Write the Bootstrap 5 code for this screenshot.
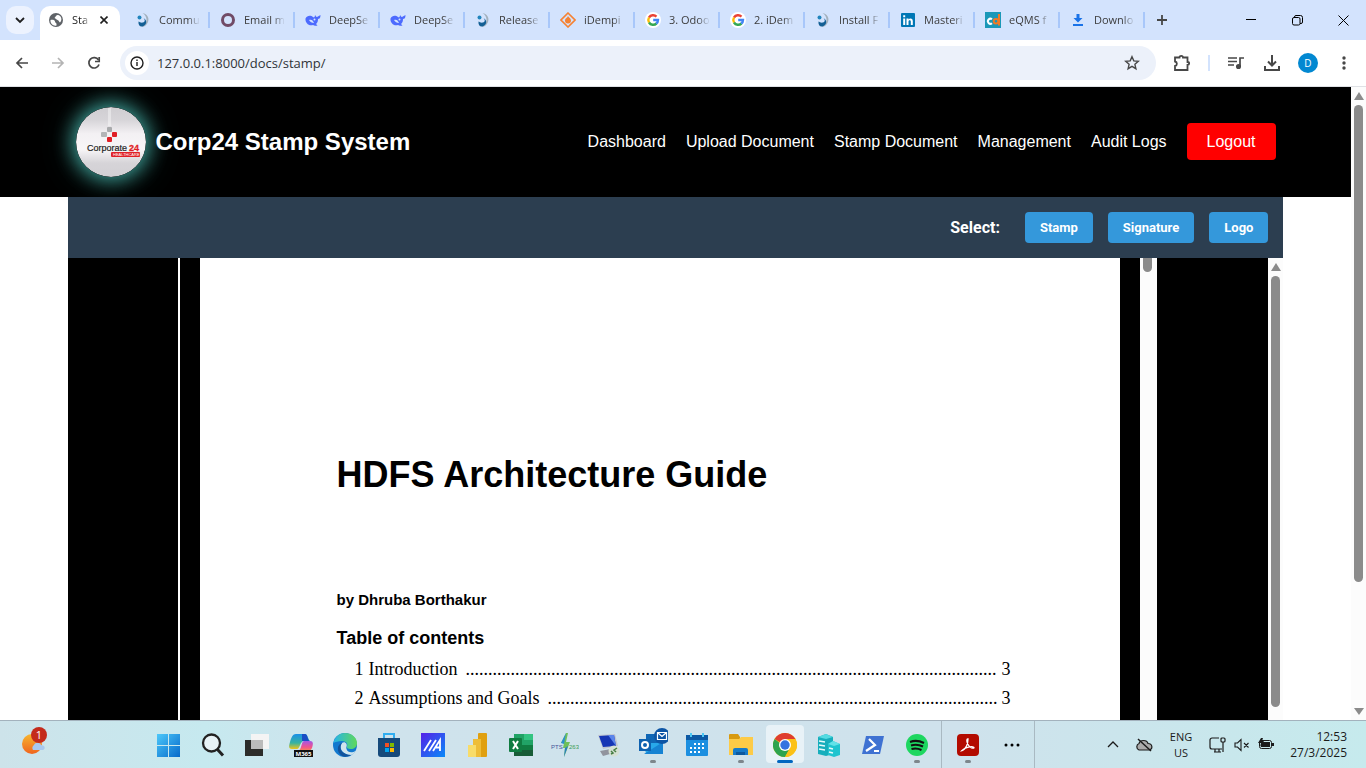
<!DOCTYPE html>
<html lang="en">
<head>
<meta charset="utf-8">
<meta name="viewport" content="width=device-width, initial-scale=1">
<title>Stamp Document</title>
<link rel="stylesheet" href="https://cdn.jsdelivr.net/npm/bootstrap@5.3.0/dist/css/bootstrap.min.css">
<style>
  body { font-family: "Liberation Sans", Arial, sans-serif; color: #000; background: #fff; }
  button { font-family: inherit; }
  svg { display: block; flex: none; }
  .bare { border: 0; background: none; padding: 0; color: inherit; }
  .ui-font { font-family: "Open Sans", "Noto Sans", sans-serif; }

  /* browser tabs */
  .tabstrip { height: 40px; background: #d3e3fd; color: #3c3c3c; font-size: 11px; }
  .tab-search { width: 28px; height: 28px; margin: 0 6px; border-radius: 10px; background: #ecf2fe; }
  .tab-row { min-width: 0; }
  .browser-tab { flex: 0 1 85px; height: 16px; padding: 0 8px 0 10px; gap: 8px; margin-top: 12px; border: 0; border-right: 2px solid #a8c7fa; background: none; color: inherit; min-width: 0; }
  .tab-title { flex: 1; overflow: hidden; white-space: nowrap; text-align: left; line-height: 20px; -webkit-mask-image: linear-gradient(90deg, #000 70%, transparent); mask-image: linear-gradient(90deg, #000 70%, transparent); }
  .active-tab { width: 80px; height: 34px; padding: 0 8px; gap: 8px; background: #fff; border-radius: 10px 10px 0 0; color: #1f1f1f; margin-right: 5px; padding-bottom: 6px; }
  .active-tab .tab-title { flex: none; width: 17px; }
  .win-btn { width: 46px; height: 40px; color: #000; }

  /* address bar */
  .addressbar { height: 47px; border-bottom: 1px solid #dfe1e5; background: #fff; color: #474747; }
  .nav-btn { width: 36px; height: 34px; }
  .omnibox { height: 34px; border-radius: 17px; background: #ecf1fa; margin-left: 8px; }
  .site-info { width: 24px; height: 24px; margin: 0 8px 0 5px; border-radius: 50%; background: #fff; color: #1f1f1f; }
  .omnibox input { font-family: "Open Sans", sans-serif; font-size: 13px; color: #303438; line-height: 24px; outline: 0; }
  .tool-btn { width: 36px; height: 34px; }
  .tool-split { width: 2px; height: 16px; background: #d3e3fd; margin: 0 8px; }
  .avatar { width: 20px; height: 20px; border-radius: 50%; background: #0288d1; color: #fff; font-size: 10px; margin: 0 8px; }

  /* site header */
  .site-header { background: #000; padding: 20px 0; }
  .header-inner { max-width: 1200px; }
  .brand-mark { width: 70px; height: 70px; border-radius: 50%; box-shadow: 0 0 20px 3px #42a8a0, 0 0 40px rgba(64, 160, 150, .25); }
  .brand-name { font-size: 24px; line-height: 30px; font-weight: 700; color: #fff; margin-left: 10px; }
  .site-nav { gap: 20px; font-size: 16px; line-height: 21px; padding-bottom: 1px; }
  .site-nav a { color: #fff; text-decoration: none; }
  .site-nav .logout { background: #f00; border-radius: 4px; padding: 8px 20px; }

  /* stamping tools */
  .work-area { width: 90%; }
  .stamp-bar { background: #2c3e50; padding: 15px; gap: 15px; font-family: Roboto, sans-serif; font-weight: 700; color: #fff; }
  .stamp-bar .pick-label { font-size: 16px; line-height: 20px; margin-right: 10px; }
  .stamp-bar button { background: #3498db; color: #fff; border: 0; border-radius: 4px; font-size: 13px; line-height: 15px; font-weight: 700; padding: 8px 15px; }

  /* document viewer */
  .black-bg { background: #000; }
  .pdf-frame { width: 979px; background: #000; border-left: 2px solid #fff; }
  .paper { background: #fff; margin: 0 20px; padding: 196px 110px 0 136px; }
  .paper h1 { font-size: 36px; line-height: 42px; font-weight: 700; margin: 0 0 94px; }
  .byline { font-size: 15px; line-height: 20px; font-weight: 700; margin: 0 0 16px; }
  .paper h2 { font-size: 18px; line-height: 24px; font-weight: 700; margin: 0 0 5px; }
  .toc { font-family: "Liberation Serif", "Times New Roman", serif; font-size: 18px; line-height: 29px; padding-left: 18px; white-space: nowrap; }
  .toc a { color: #000; text-decoration: none; }
  .toc .num { width: 14px; }
  .toc .num-sub { width: 28px; }
  .toc .leader { width: 0; }

  /* scrollbars */
  .scroll-rail { width: 15px; background: #fcfcfc; padding: 5px 3px; }
  .scroll-thumb { width: 9px; border-radius: 5px; background: #8b8b8b; }
  .arrow-up { border: 5px solid transparent; border-top: 0; border-bottom: 8px solid #8b8b8b; margin-bottom: 5px; }
  .arrow-down { border: 5px solid transparent; border-bottom: 0; border-top: 7px solid #8b8b8b; }
  .page-rail .scroll-thumb { height: 477px; }
  .pdf-rail { width: 17px; padding: 0 4px 0 3px; }
  .pdf-rail .scroll-thumb { height: 14px; border-radius: 0 0 5px 5px; }

  /* desktop taskbar */
  .taskbar { height: 48px; border-top: 1px solid #a3b2bd; background: linear-gradient(90deg, #cde3ea 0, #c6e9ef 15%, #cfe3ec 25%, #cfe2ec 70%, #c8e7ec 90%, #c6eaed 100%); color: #1b1b1b; }
  .task-left { width: 147px; padding-left: 21px; }
  .task-app { width: 44px; height: 47px; position: relative; }
  .task-app.running::after { content: ""; position: absolute; bottom: 5px; left: 19px; width: 6px; height: 3px; border-radius: 2px; background: #7d868c; }
  .task-app.current::before { content: ""; position: absolute; inset: 4px 3px 5px 3px; border-radius: 4px; background: #e8f2f7; }
  .task-app.current::after { left: 14px; width: 16px; background: #0067c0; }
  .task-app svg { position: relative; }
  .task-split { width: 1px; height: 47px; background: #a9b9c2; margin-left: 2px; }
  .tray { font-size: 11px; line-height: 16px; padding-right: 19px; }
  .tray .lang { width: 48px; }
  .clock { width: 72px; font-size: 12px; }
</style>
</head>
<body class="vh-100 d-flex flex-column overflow-hidden">

<svg width="0" height="0" class="position-absolute" aria-hidden="true">
  <defs>
    <symbol id="swirl" viewBox="0 0 16 16"><path d="M7.500 1c5 1 7 5 5.500 9-1 3-4 5-6.500 5 3-2 5-4 5-7.500C11.500 5 10 2.500 7.500 1z" fill="#a3b0bc"/><path d="M8.500 6c2 2 1.500 4-.5 4.500-2 .5-3.500-.5-4.500-1C3 13 5 15 7.500 14.500 12 13 12.500 8 8.500 6z" fill="#135f94"/><circle cx="4.500" cy="5.500" r="2" fill="#2285bd"/></symbol>
    <symbol id="whale" viewBox="0 0 16 16"><path d="M.5 6.500C2 3 6 3 8 5c1 1 2 0 2-2 1 1 1 2 2 2l3.500-2c0 3-1 4-2.500 4 0 3-1 4-2 5l1.500 1.500C10 14.500 9 13 8 13c-4 1.500-8-2-7.500-6.500z" fill="#4d6bfe"/><path d="M4 8c2-1 4 0 5 3-2 0-4-1-5-3z" fill="#d3e3fd"/><circle cx="9.500" cy="7.500" r="1" fill="#d3e3fd"/></symbol>
    <symbol id="gee" viewBox="0 0 16 16"><circle cx="8" cy="8" r="8" fill="#fff"/><g fill="none" stroke-width="2.400"><path d="M4 5.500A4.900 4.900 0 0 1 11.500 4.600" stroke="#ea4335"/><path d="M4 5.500a5 5 0 0 0 0 5" stroke="#fbbc05"/><path d="M4 10.500a4.900 4.900 0 0 0 7.500 1" stroke="#34a853"/><path d="M8.200 8h4.800c0 1.500-.5 2.700-1.700 3.700" stroke="#4285f4"/></g></symbol>
  </defs>
</svg>

<nav class="tabstrip ui-font d-flex align-items-end flex-shrink-0" aria-label="Browser tabs">
  <button class="tab-search bare d-flex align-items-center justify-content-center align-self-center" aria-label="Search tabs"><svg width="10" height="8" fill="none" stroke="#1f1f1f" stroke-width="1.800"><path d="M1 2 5 6l4-4"/></svg></button>
  <div class="active-tab d-flex align-items-center">
    <svg width="16" height="16"><circle cx="8" cy="8" r="7" fill="#5f6368"/><path d="M2.500 8c2-.5 4.500 0 4.500 1.500s2 1 1.500 4c-3 1-6.500-2-6-5.500zM8 4C9 2.500 11 3 12.500 4.500 14 6.500 13.500 9 12 10.500c-1-.5-1-2-2.500-2.500S8 6.500 6.500 6z" fill="#fff"/></svg>
    <span class="tab-title">Sta</span>
    <button class="bare ms-auto me-1" aria-label="Close tab"><svg width="8" height="8" stroke="#1f1f1f" stroke-width="1.600"><path d="m.5.5 7 7m0-7-7 7"/></svg></button>
  </div>
  <div class="tab-row d-flex flex-grow-1 align-self-start">
    <button class="browser-tab d-flex align-items-center"><svg width="16" height="16"><use href="#swirl"/></svg><span class="tab-title">Commu</span></button>
    <button class="browser-tab d-flex align-items-center"><svg width="16" height="16"><circle cx="8" cy="8" r="5.500" fill="none" stroke="#714b67" stroke-width="3"/></svg><span class="tab-title">Email m</span></button>
    <button class="browser-tab d-flex align-items-center"><svg width="16" height="16"><use href="#whale"/></svg><span class="tab-title">DeepSe</span></button>
    <button class="browser-tab d-flex align-items-center"><svg width="16" height="16"><use href="#whale"/></svg><span class="tab-title">DeepSe</span></button>
    <button class="browser-tab d-flex align-items-center"><svg width="16" height="16"><use href="#swirl"/></svg><span class="tab-title">Release</span></button>
    <button class="browser-tab d-flex align-items-center"><svg width="16" height="16"><path d="m8 1 7 7-7 7-7-7z" fill="none" stroke="#f58233" stroke-width="1.600"/><path d="M8 3.500c0 2 3 2.500 3 5a3 3 0 0 1-6 0C5 6 8 6 8 3.500z" fill="#f58233"/></svg><span class="tab-title">iDempi</span></button>
    <button class="browser-tab d-flex align-items-center"><svg width="16" height="16"><use href="#gee"/></svg><span class="tab-title">3. Odoo</span></button>
    <button class="browser-tab d-flex align-items-center"><svg width="16" height="16"><use href="#gee"/></svg><span class="tab-title">2. iDem</span></button>
    <button class="browser-tab d-flex align-items-center"><svg width="16" height="16"><use href="#swirl"/></svg><span class="tab-title">Install F</span></button>
    <button class="browser-tab d-flex align-items-center"><svg width="16" height="16"><rect x="1" y="1" width="14" height="14" rx="1" fill="#0077b5"/><path d="M3.200 6.500h2V13h-2zM3.200 3.200h2v2h-2zM6.500 6.500h2v1c1-1.600 4.300-1.600 4.300 1.500v4h-2V9.500c0-1.700-2.300-1.700-2.300 0V13h-2z" fill="#fff"/></svg><span class="tab-title">Masteri</span></button>
    <button class="browser-tab d-flex align-items-center"><svg width="16" height="16"><rect width="16" height="16" fill="#1b98b8"/><path d="M7 7.300A2.500 2.500 0 1 0 7 11.200" fill="none" stroke="#fff" stroke-width="2"/><circle cx="11" cy="9.300" r="2.300" fill="none" stroke="#f27a24" stroke-width="2"/><path d="M14 2v11.500" stroke="#f27a24" stroke-width="2"/></svg><span class="tab-title">eQMS f</span></button>
    <button class="browser-tab d-flex align-items-center"><svg width="16" height="16"><path d="M6.500 2h3v4h3L8 10.500 3.500 6h3zM3 12h10v2H3z" fill="#1a73e8"/></svg><span class="tab-title">Downlo</span></button>
    <button class="bare ms-2 mt-2 pt-1 px-1" aria-label="New tab"><svg width="10" height="16" stroke="#474747" stroke-width="1.800"><path d="M5 3v10M0 8h10"/></svg></button>
  </div>
  <div class="d-flex">
    <button class="win-btn bare d-flex align-items-center justify-content-center" aria-label="Minimize"><svg width="10" height="2"><path d="M0 .5h10" stroke="#000"/></svg></button>
    <button class="win-btn bare d-flex align-items-center justify-content-center" aria-label="Restore"><svg width="11" height="11" fill="none" stroke="#000"><rect x=".5" y="2.500" width="7.500" height="7.500" rx="1.500"/><path d="M2.500 2.500V2A1.500 1.500 0 0 1 4 .5h4.500a2 2 0 0 1 2 2V7a1.500 1.500 0 0 1-1.500 1.500H8"/></svg></button>
    <button class="win-btn bare d-flex align-items-center justify-content-center" aria-label="Close"><svg width="11" height="11" stroke="#000"><path d="m.5.5 10 10m0-10-10 10"/></svg></button>
  </div>
</nav>

<div class="addressbar ui-font d-flex align-items-center px-1 flex-shrink-0">
  <button class="nav-btn bare d-flex align-items-center justify-content-center" aria-label="Back"><svg width="14" height="12" fill="none" stroke="#474747" stroke-width="1.700"><path d="M13 6H2m5-5L2 6l5 5"/></svg></button>
  <button class="nav-btn bare d-flex align-items-center justify-content-center" aria-label="Forward"><svg width="14" height="12" fill="none" stroke="#b4b4b4" stroke-width="1.700"><path d="M1 6h11M7 1l5 5-5 5"/></svg></button>
  <button class="nav-btn bare d-flex align-items-center justify-content-center" aria-label="Reload"><svg width="14" height="14" fill="none" stroke="#474747" stroke-width="1.700"><path d="M11.500 4A5.200 5.200 0 1 0 12 8.500"/><path d="M12.200 1v4.500H8"/></svg></button>
  <div class="omnibox d-flex align-items-center flex-grow-1">
    <button class="site-info bare d-flex align-items-center justify-content-center" aria-label="Site information"><svg width="14" height="14" fill="none" stroke="#1f1f1f" stroke-width="1.400"><circle cx="7" cy="7" r="6"/><path d="M7 6v4M7 3.500V5" /></svg></button>
    <input class="bare flex-grow-1" aria-label="Address" value="127.0.0.1:8000/docs/stamp/">
    <button class="bare me-3" aria-label="Bookmark this tab"><svg width="16" height="16" fill="none" stroke="#474747" stroke-width="1.400"><path d="m8 1.700 1.800 4.200 4.500.4-3.400 3 1 4.400L8 11.400l-3.900 2.300 1-4.400-3.400-3 4.500-.4z"/></svg></button>
  </div>
  <button class="tool-btn bare d-flex align-items-center justify-content-center ms-2" aria-label="Extensions"><svg width="18" height="18" fill="none" stroke="#474747" stroke-width="1.800"><path d="M2 3.500h4.500C6.500 1.300 10 1.300 10 3.500h4.500V8c2.200 0 2.200 3 0 3v5H2v-4c2.500-.5 2.500-4 0-4.500z"/></svg></button>
  <span class="tool-split"></span>
  <button class="tool-btn bare d-flex align-items-center justify-content-center" aria-label="Media controls"><svg width="18" height="16" fill="none" stroke="#474747" stroke-width="1.700"><path d="M1 3h9M1 6.500h9M1 10h6M13 12V3h4"/><circle cx="11.500" cy="11.500" r="1.700" fill="#474747"/></svg></button>
  <button class="tool-btn bare d-flex align-items-center justify-content-center" aria-label="Downloads"><svg width="16" height="16" fill="none" stroke="#474747" stroke-width="2"><path d="M8 0v10M4 6.500l4 4 4-4M1 11v4h14v-4"/></svg></button>
  <button class="avatar bare d-flex align-items-center justify-content-center" aria-label="Profile">D</button>
  <button class="tool-btn bare d-flex align-items-center justify-content-center" aria-label="Menu"><svg width="4" height="14" fill="#474747"><circle cx="2" cy="2" r="1.700"/><circle cx="2" cy="7" r="1.700"/><circle cx="2" cy="12" r="1.700"/></svg></button>
</div>

<div class="d-flex flex-grow-1 overflow-hidden">
  <div class="flex-grow-1 d-flex flex-column overflow-hidden">
    <header class="site-header">
      <div class="header-inner mx-auto d-flex align-items-center">
        <svg class="brand-mark" viewBox="0 0 70 70" role="img" aria-label="Corporate 24 Healthcare">
          <defs><linearGradient id="disc" x2="0" y2="1"><stop offset="0" stop-color="#cfcdd1"/><stop offset=".18" stop-color="#d6d4d8"/><stop offset=".38" stop-color="#f3f0f3"/><stop offset=".6" stop-color="#f8f6f8"/><stop offset=".8" stop-color="#d6d4d8"/><stop offset="1" stop-color="#d2d0d4"/></linearGradient></defs>
          <circle cx="35" cy="35" r="35" fill="url(#disc)"/>
          <path d="M32 1h3v18h-3z" fill="#fff" opacity=".4"/>
          <g><rect x="31" y="20" width="5" height="5" rx="1" fill="#a9aaac"/><rect x="25" y="25" width="6" height="5" rx="1" fill="#b3b4b6"/><rect x="36" y="25" width="5" height="5" rx="1" fill="#e01f26"/><rect x="31" y="30" width="5" height="5" rx="1" fill="#e01f26"/></g>
          <text x="11" y="44" font-family="Liberation Sans, sans-serif" font-size="9" fill="#222" stroke="#222" stroke-width=".2">Corporate</text>
          <text x="53" y="44" font-family="Liberation Sans, sans-serif" font-size="9" font-weight="700" fill="#e01f26" stroke="#e01f26" stroke-width=".3">24</text>
          <rect x="35" y="45" width="29" height="5" rx="1" fill="#e01f26"/>
          <text x="37" y="49" font-family="Liberation Sans, sans-serif" font-size="4" fill="#fff">HEALTHCARE</text>
        </svg>
        <span class="brand-name">Corp24 Stamp System</span>
        <nav class="site-nav d-flex align-items-center ms-auto" aria-label="Main">
          <a href="#">Dashboard</a>
          <a href="#">Upload Document</a>
          <a href="#">Stamp Document</a>
          <a href="#">Management</a>
          <a href="#">Audit Logs</a>
          <a href="#" class="logout">Logout</a>
        </nav>
      </div>
    </header>

    <main class="work-area mx-auto flex-grow-1 d-flex flex-column overflow-hidden position-relative">
      <div class="stamp-bar d-flex align-items-center justify-content-end">
        <span class="pick-label">Select:</span>
        <button>Stamp</button>
        <button>Signature</button>
        <button>Logo</button>
      </div>
      <div class="d-flex flex-grow-1 overflow-hidden">
        <div class="black-bg flex-grow-1 d-flex justify-content-center overflow-hidden">
          <div class="pdf-frame d-flex">
            <article class="paper flex-grow-1">
              <h1>HDFS Architecture Guide</h1>
              <p class="byline">by Dhruba Borthakur</p>
              <h2>Table of contents</h2>
              <div class="toc">
                <a href="#" class="d-flex"><span class="num">1</span><span>Introduction</span><span class="leader flex-grow-1 overflow-hidden ms-2">......................................................................................................................</span><span>3</span></a>
                <a href="#" class="d-flex"><span class="num">2</span><span>Assumptions and Goals</span><span class="leader flex-grow-1 overflow-hidden ms-2">....................................................................................................</span><span>3</span></a>
                <a href="#" class="d-flex ps-2"><span class="num-sub">2.1</span><span>Hardware Failure</span></a>
              </div>
            </article>
            <div class="scroll-rail pdf-rail"><div class="scroll-thumb"></div></div>
          </div>
        </div>
        <div class="scroll-rail d-flex flex-column align-items-center">
          <span class="arrow-up"></span>
          <div class="scroll-thumb flex-grow-1 mb-2"></div>
        </div>
      </div>
    </main>
  </div>
  <div class="scroll-rail page-rail d-flex flex-column align-items-center">
    <span class="arrow-up"></span>
    <div class="scroll-thumb"></div>
    <span class="arrow-down mt-auto"></span>
  </div>
</div>

<footer class="taskbar ui-font d-flex align-items-center flex-shrink-0">
  <div class="task-left">
    <button class="bare" aria-label="Weather, 1 alert"><svg width="28" height="30"><defs><linearGradient id="sun" x2="0" y2="1"><stop stop-color="#f7b62f"/><stop offset="1" stop-color="#f0641e"/></linearGradient></defs><circle cx="11" cy="17" r="10" fill="url(#sun)"/><path d="M12 23a3.500 3.500 0 0 1 1-5c1-3 6-3 7 0 4 0 5 4 2 5z" fill="#a9c8ef"/><circle cx="18" cy="8" r="8" fill="#c42b1c"/><text x="18" y="12" text-anchor="middle" font-size="11" fill="#fff">1</text></svg></button>
  </div>
  <div class="d-flex">
    <button class="task-app bare d-flex align-items-center justify-content-center" aria-label="Start"><svg width="24" height="24"><defs><linearGradient id="win" x2="1" y2="1"><stop stop-color="#4cc8fa"/><stop offset="1" stop-color="#0669ca"/></linearGradient></defs><path d="M0 1h11v11H0zM12 1h11v11H12zM0 13h11v11H0zM12 13h11v11H12z" fill="url(#win)"/></svg></button>
    <button class="task-app bare d-flex align-items-center justify-content-center" aria-label="Search"><svg width="24" height="24" fill="#e8f3f7" stroke="#222" stroke-width="2.300"><circle cx="10.500" cy="10" r="8.500"/><path d="m16.500 16.500 5.500 6" stroke-width="3"/></svg></button>
    <button class="task-app bare d-flex align-items-center justify-content-center" aria-label="Task view"><svg width="24" height="24"><path d="M6 1h18v15H6z" fill="#f4f4f4"/><path d="M0 7h18v16H0z" fill="#2c2c2a"/><path d="M6 7h12v9H6z" fill="#bbb"/></svg></button>
    <button class="task-app bare d-flex align-items-center justify-content-center" aria-label="Microsoft 365 Copilot"><svg width="24" height="24"><defs><linearGradient id="cpa" x2="0" y2="1"><stop stop-color="#1a8fe8"/><stop offset=".6" stop-color="#38b3a0"/><stop offset="1" stop-color="#f0c419"/></linearGradient><linearGradient id="cpb" x2="0" y2="1"><stop stop-color="#a457e6"/><stop offset=".6" stop-color="#f0538d"/><stop offset="1" stop-color="#f78a4d"/></linearGradient></defs><path d="M7 1h9c3 0 3 6 5 7h-6c-4 0-4 8-7 8H3c-4 0-3-3-2-7 1-3 2-8 6-8z" fill="url(#cpa)"/><path d="M13 1h3c3 0 2 6 5 7h-8z" fill="#1a4dc4"/><path d="M15 8h6c4 0 3 4 2 7-1 2-2 3-4 3H9c4-1 3-10 6-10z" fill="url(#cpb)"/><rect x="5" y="17" width="19" height="7" fill="#111"/><text x="14.500" y="23" text-anchor="middle" font-size="6" font-weight="700" fill="#fff">M365</text></svg></button>
    <button class="task-app bare d-flex align-items-center justify-content-center" aria-label="Edge"><svg width="24" height="24"><defs><linearGradient id="edg" x2="1"><stop stop-color="#27b4e8"/><stop offset="1" stop-color="#60d95a"/></linearGradient></defs><circle cx="12" cy="12" r="12" fill="#1279cf"/><path d="M.5 10C2 3 7 0 12 0c7 0 12 5 12 10 0 4-3 6-6 6-3 0-5-1-4-3 1-1 0-5-5-5-4 0-7 1-8.500 2z" fill="url(#edg)"/><path d="M9 10c-4 5 1 12 9 12 2 0 4-3 4.500-4-3 2-8 2-9-2-1-2 1-3 0-5-1-2-3-2-4.500-1z" fill="#cfe4ed"/><path d="M9 10c-4 5 0 12 9 12-3 2-7 2-9 1-6-4-5-12 0-13z" fill="#12539c"/></svg></button>
    <button class="task-app bare d-flex align-items-center justify-content-center" aria-label="Microsoft Store"><svg width="24" height="24"><path d="M7 5V1h10v4" fill="none" stroke="#31aef0" stroke-width="2"/><path d="M1 5h22v16a3 3 0 0 1-3 3H4a3 3 0 0 1-3-3z" fill="#164a7b"/><path d="M8 10h4v4H8z" fill="#f25022"/><path d="M13 10h4v4h-4z" fill="#7fba00"/><path d="M8 15h4v4H8z" fill="#00a4ef"/><path d="M13 15h4v4h-4z" fill="#ffb900"/></svg></button>
    <button class="task-app bare d-flex align-items-center justify-content-center" aria-label="MyASUS"><svg width="24" height="24"><defs><linearGradient id="asu" x2="1" y2="1"><stop stop-color="#5520e8"/><stop offset="1" stop-color="#098af8"/></linearGradient></defs><rect width="24" height="24" fill="url(#asu)"/><path d="m3 18 7-11M8 18l7-11M12 18l7-11v11M15 14.500h4" fill="none" stroke="#fff" stroke-width="1.800"/></svg></button>
    <button class="task-app bare d-flex align-items-center justify-content-center" aria-label="Power BI"><svg width="20" height="24"><rect x="11" width="9" height="24" rx="1" fill="#e0a010"/><path d="M6 6h8v18H6z" fill="#eebd38"/><path d="M1 12h8v12H1z" fill="#f8dc6a"/></svg></button>
    <button class="task-app bare d-flex align-items-center justify-content-center" aria-label="Excel"><svg width="24" height="24"><path d="M5 1h19v22H5z" fill="#21a366"/><path d="M15 1h9v6h-9z" fill="#33c481"/><path d="M5 12h19v11H5z" fill="#107c41"/><path d="M5 17h19v6H5z" fill="#185c37"/><rect y="5" width="13" height="14" rx="1" fill="#107c41"/><path d="m4 8 5 8m0-8-5 8" stroke="#fff" stroke-width="2"/></svg></button>
    <button class="task-app bare d-flex align-items-center justify-content-center" aria-label="PTS 263"><svg width="28" height="26"><path d="m15 1-5 10h3l-1 5h2l-1 9 6-15h-4l2-9z" fill="#6fbf5a"/><path d="m15 1-5 10 3 1z" fill="#2b8fd0"/><path d="m13 25 1-9 3-2z" fill="#2b7fc0"/><text x="0" y="17" font-family="Liberation Sans" font-size="6" fill="#46529a">PTS</text><text x="18" y="17" font-family="Liberation Sans" font-size="6" fill="#3a9c55">263</text></svg></button>
    <button class="task-app bare d-flex align-items-center justify-content-center" aria-label="PuTTY"><svg width="24" height="24"><path d="m1 2 17-1 3 12-15 3z" fill="#c0c5cf"/><path d="m2 3 15-1 2 11-13 1z" fill="#1636b5"/><path d="m11 2 6 0 2 11z" fill="#5b85eb"/><path d="m3 18 16-3 1 4-14 4z" fill="#91949e"/><circle cx="17" cy="18" r="5.500" fill="#d6e1d4"/><path d="m14 18 2 2-2 1m6-6-3 2 2 2" stroke="#467d42" fill="none" stroke-width="1.500"/></svg></button>
    <button class="task-app running bare d-flex align-items-center justify-content-center" aria-label="Outlook"><svg width="30" height="34"><path d="M8 6h14v16H8z" fill="#1066b5"/><path d="M6 15h19v11H8z" fill="#28a8ea"/><path d="m6 26 19-12v12z" fill="#1683d3"/><rect x="1" y="11" width="12" height="12" fill="#0f62b0"/><circle cx="7" cy="17" r="3" fill="none" stroke="#fff" stroke-width="2"/><circle cx="24" cy="8" r="8" fill="#0d55a5"/><path d="M19.500 4.500h9v7h-9zl4.500 4 4.500-4" fill="none" stroke="#fff" stroke-width="1.200"/></svg></button>
    <button class="task-app bare d-flex align-items-center justify-content-center" aria-label="Calendar"><svg width="22" height="24"><rect y="2" width="22" height="21" rx="1" fill="#1c8fe0"/><path d="M0 2h22v5H0z" fill="#0c59a4"/><path d="M4 0h2v4H4zM16 0h2v4h-2z" fill="#4cc8f4"/><path d="M8 11h12M4 15h16M4 19h12" stroke="#fff" stroke-width="2" stroke-dasharray="2 2"/></svg></button>
    <button class="task-app running bare d-flex align-items-center justify-content-center" aria-label="File Explorer"><svg width="24" height="24"><path d="M0 2a1 1 0 0 1 1-1h8l2 3v6H0z" fill="#d89a11"/><path d="M0 6h10l2-2h12v18H0z" fill="#fdcb47"/><path d="M4 22v-5q0-2 2-2h11q2 0 2 2v5z" fill="#167bc9"/><path d="M7 19h9v3H7z" fill="#0c599f"/></svg></button>
    <button class="task-app running current bare d-flex align-items-center justify-content-center" aria-label="Chrome"><svg width="24" height="24"><circle cx="12" cy="12" r="12" fill="#fbc116"/><path d="M12 12 1.600 6A12 12 0 0 1 22.400 6z" fill="#df3e30"/><path d="M1.600 6A12 12 0 0 0 12 24l5-9-5-1z" fill="#2da44e"/><path d="M12 6h10.400A12 12 0 0 1 12 24l5-9z" fill="#fbc116"/><circle cx="12" cy="12" r="6" fill="#fff"/><circle cx="12" cy="12" r="4.700" fill="#3474e0"/></svg></button>
    <button class="task-app bare d-flex align-items-center justify-content-center" aria-label="Servers"><svg width="24" height="24"><path d="m1 4 8-3 7 3v17l-7 2-8-2z" fill="#16aebc"/><path d="m1 4 8-3 7 3-7 2z" fill="#54dbe2"/><path d="m11 11 5-3 7 3v11l-6 2-6-2z" fill="#1ec4cf"/><path d="m11 11 5-3 7 3-6 2z" fill="#62e2e8"/><path d="m2 8 6 1M2 12l6 1M2 16l6 1M12 15l4 1m-4 3 4 1" stroke="#e6fbfc" stroke-width="1.500"/></svg></button>
    <button class="task-app bare d-flex align-items-center justify-content-center" aria-label="PowerShell"><svg width="24" height="24"><path d="M5 3h18l-4 18H1z" fill="#3f72d2"/><path d="m8 6 6 6-9 6M13 18h5" fill="none" stroke="#fff" stroke-width="2.200"/></svg></button>
    <button class="task-app running bare d-flex align-items-center justify-content-center" aria-label="Spotify"><svg width="22" height="22"><circle cx="11" cy="11" r="11" fill="#1ed760"/><path d="M4 8c5-2 10-1 14 1M5 11.500c4-1.500 8-1 12 1M5.500 15c4-1 7-.5 10 1" fill="none" stroke="#111" stroke-width="2"/></svg></button>
    <span class="task-split"></span>
    <button class="task-app running bare d-flex align-items-center justify-content-center ms-1" aria-label="Acrobat"><svg width="22" height="22"><rect width="22" height="22" rx="4" fill="#b30b00"/><path d="M5 16.500c4-1 6-7 6-11.500-2.500 0-.5 6 2 8 2 1.500 4 1.500 4 .5 0-1.500-8-1-12 3z" fill="none" stroke="#fff" stroke-width="1.300"/></svg></button>
    <button class="task-app bare d-flex align-items-center justify-content-center" aria-label="More apps"><svg width="16" height="4"><circle cx="2" cy="2" r="1.500"/><circle cx="8" cy="2" r="1.500"/><circle cx="14" cy="2" r="1.500"/></svg></button>
    <span class="task-split ms-0"></span>
  </div>
  <div class="tray flex-grow-1 d-flex align-items-center justify-content-end">
    <button class="bare me-3" aria-label="Show hidden icons"><svg width="12" height="7" fill="none" stroke="#1b1b1b" stroke-width="1.300"><path d="m1 6 5-5 5 5"/></svg></button>
    <svg width="18" height="14"><path d="M4 12a3.500 3.500 0 0 1 0-6.500c1-4 8-4 9 0 5 0 5 6.500 1 6.500z" fill="#aaa" stroke="#1b1b1b" stroke-width="1.200"/><path d="m3 1 13 12" stroke="#1b1b1b" stroke-width="1.500"/></svg>
    <span class="lang text-center ms-1">ENG<br>US</span>
    <span class="d-flex align-items-center gap-2 ms-1">
      <svg width="17" height="18" fill="none" stroke="#1b1b1b" stroke-width="1.200"><path d="M10 2H3a2 2 0 0 0-2 2v7a2 2 0 0 0 2 2h10M5 16h7M6 13v3M10 13v3M14 6v10"/><rect x="12" y="2" width="4" height="4" rx="1"/></svg>
      <svg width="16" height="14" fill="none" stroke="#1b1b1b" stroke-width="1.100"><path d="M1 5h2.500L7 1.500v11L3.500 9H1zM10 5l4.500 4.500m0-4.500L10 9.500"/></svg>
      <svg width="17" height="14"><rect x="1.500" y="2.500" width="12" height="8" rx="2" fill="none" stroke="#1b1b1b"/><rect x="3" y="4" width="9" height="5" fill="#1b1b1b"/><path d="M14 5h2v3h-2zM3 0 0 5h3l-1 4 4-6H4l1-3z" fill="#1b1b1b"/></svg>
    </span>
    <span class="clock text-end">12:53<br>27/3/2025</span>
  </div>
</footer>

<script src="https://cdn.jsdelivr.net/npm/bootstrap@5.3.0/dist/js/bootstrap.bundle.min.js"></script>
</body>
</html>
